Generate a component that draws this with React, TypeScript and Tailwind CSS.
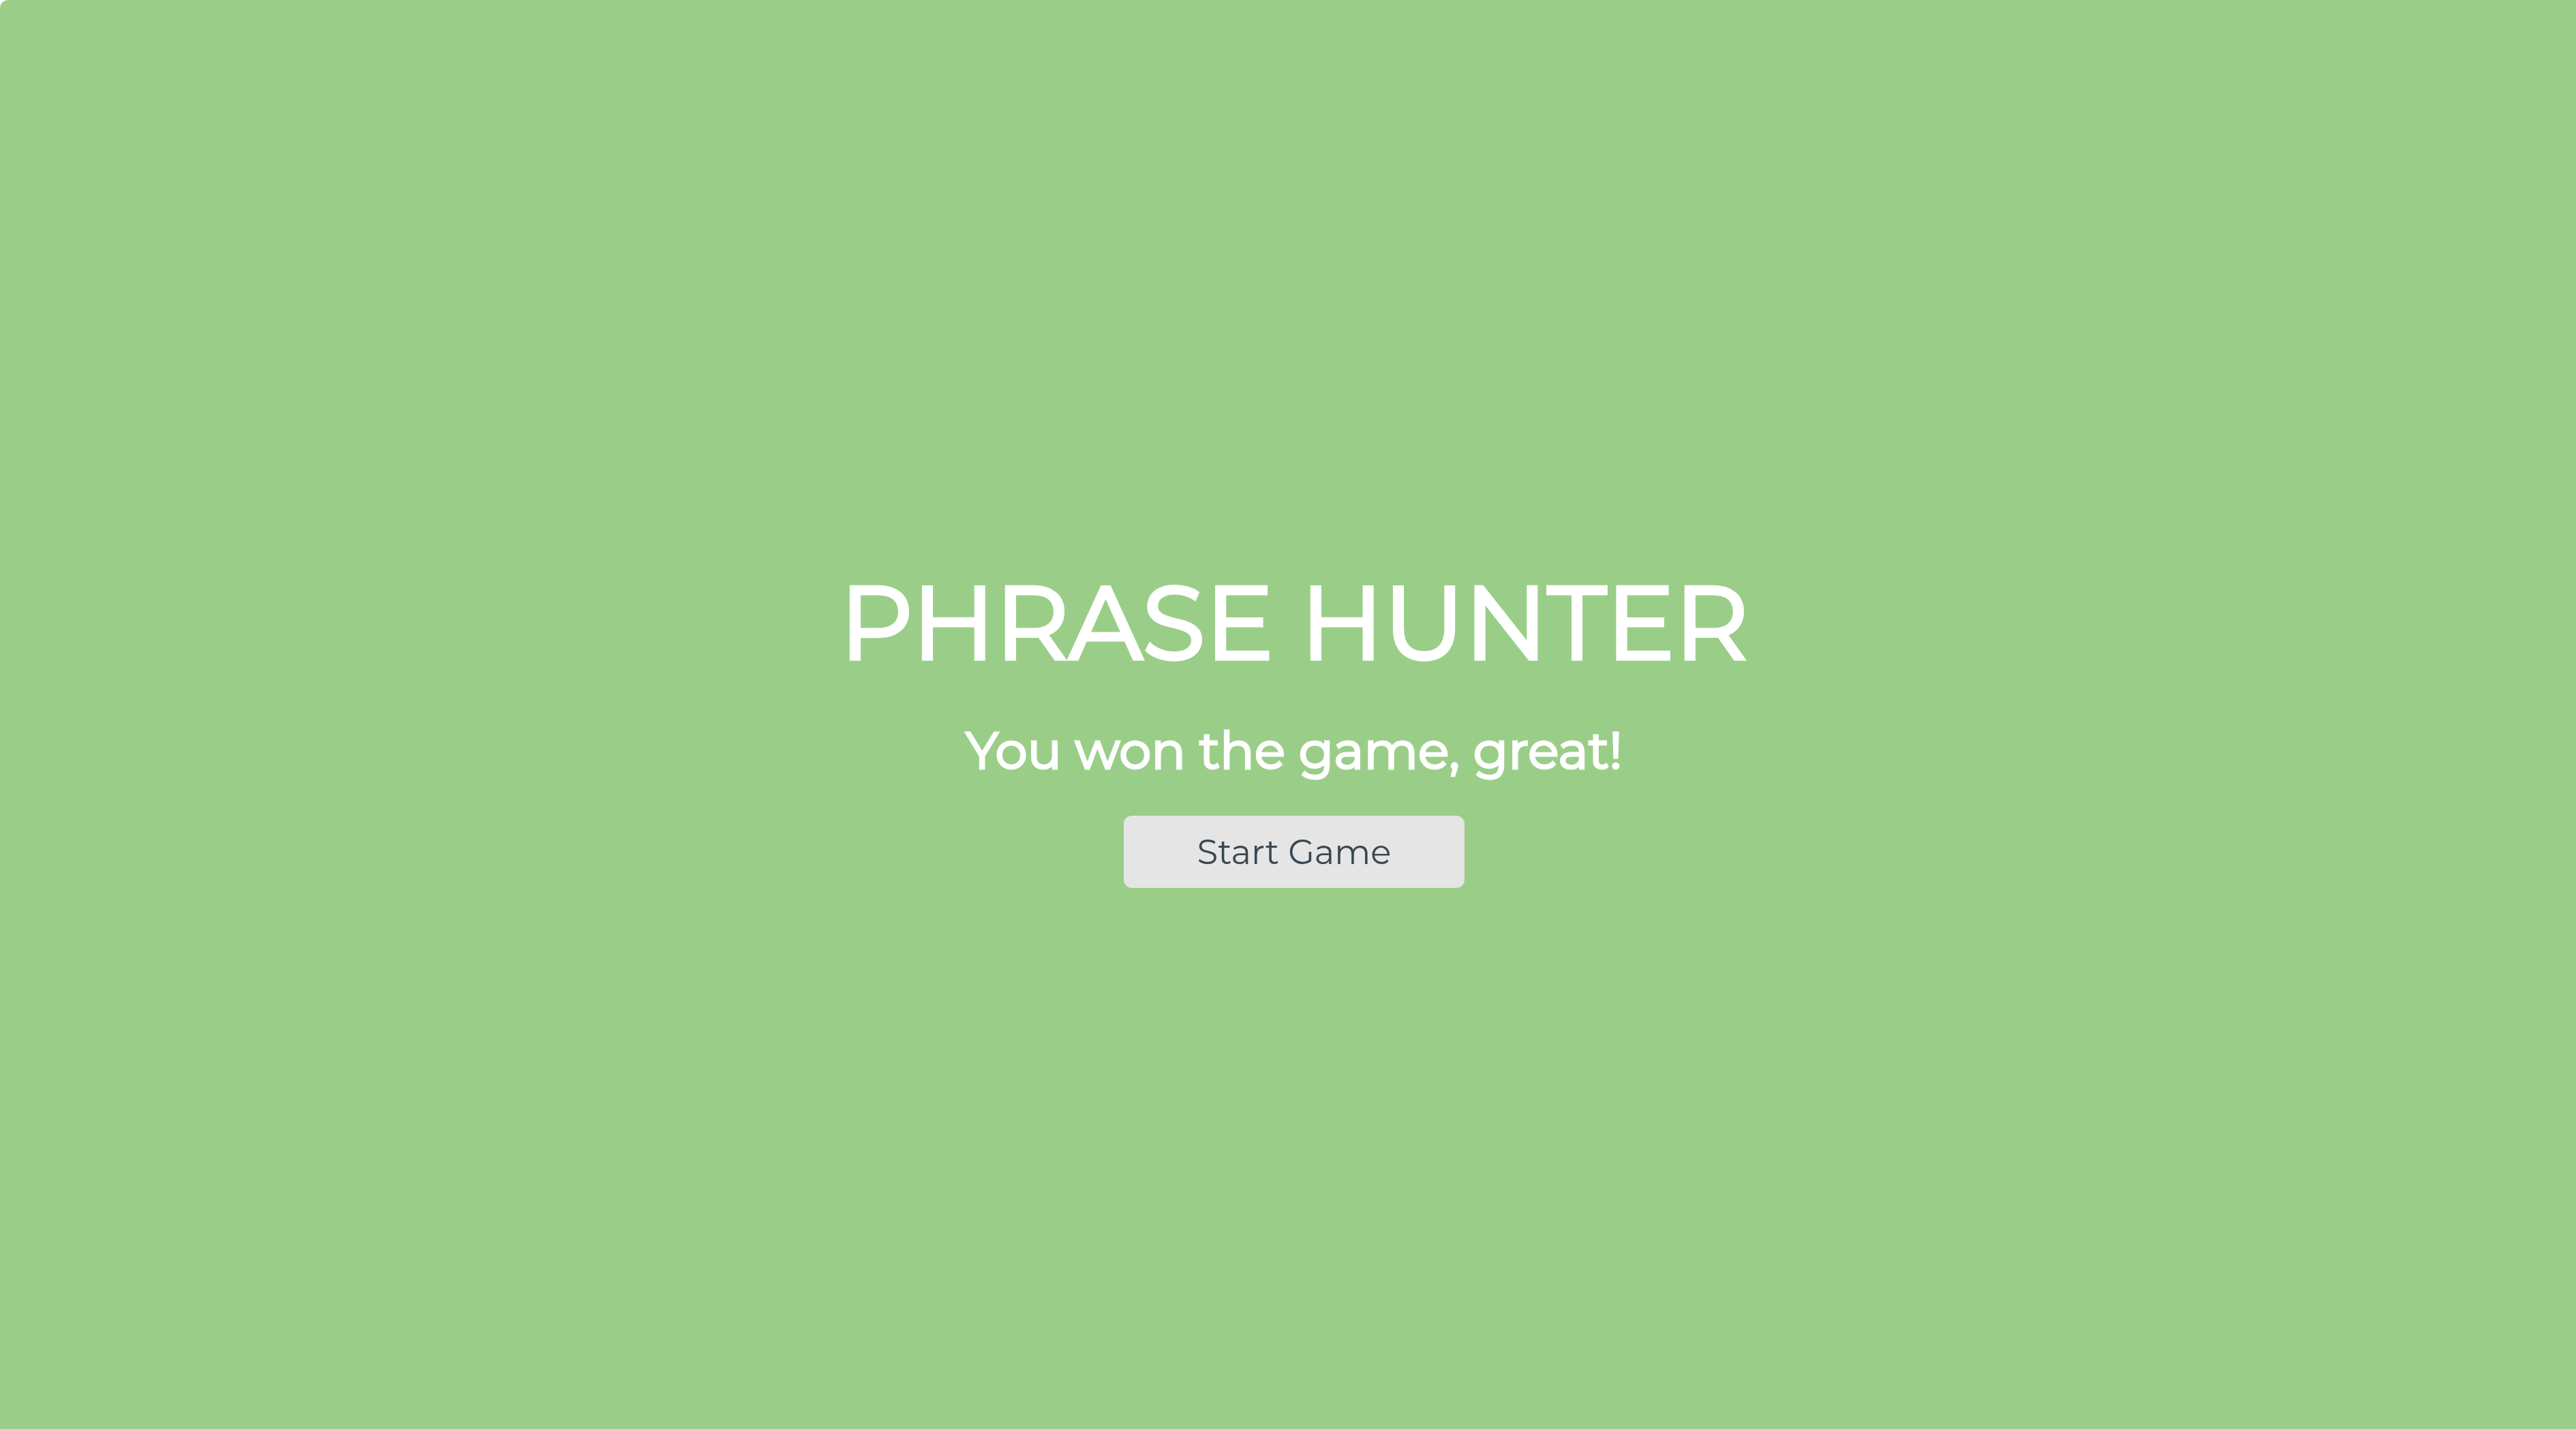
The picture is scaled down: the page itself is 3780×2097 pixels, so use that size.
export default function App() {
  return (
    <div className="bg-white">
      <main className="flex min-h-screen flex-col items-center rounded-tl-xl bg-[#9ace88] pt-[820px] pl-[18px] font-['Montserrat',Inter,sans-serif] text-white">
        <h1 className="text-[150px] leading-[188px] font-normal [-webkit-text-stroke:5px_white]">PHRASE HUNTER</h1>
        <h2 className="mt-[45px] text-[75px] leading-[96px] font-normal [-webkit-text-stroke:3px_white]">You won the game, great!</h2>
        <button type="button" className="mt-[48px] w-[500px] rounded-xl bg-[#e5e5e5] pt-[23px] pb-[21px] text-[50px] leading-[62px] font-normal text-[#3a4750]">
          Start Game
        </button>
      </main>
    </div>
  );
}
